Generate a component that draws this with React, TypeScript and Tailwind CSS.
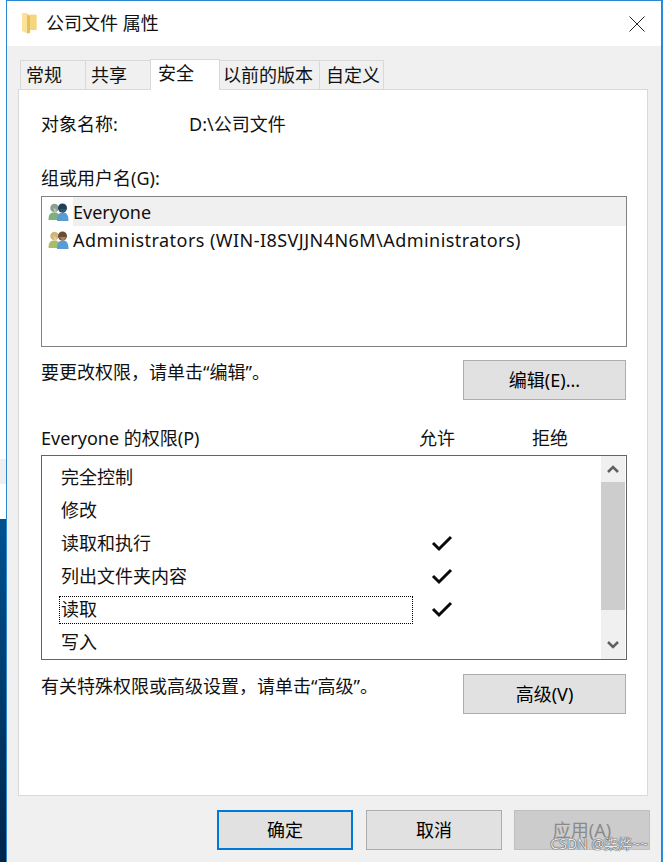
const font = "[font-family:'Noto_Sans','Noto_Sans_CJK_SC',sans-serif]";

function UsersIcon({ gold }: { gold?: boolean }) {
  return (
    <svg width="21" height="18" viewBox="0 0 21 18" className="shrink-0">
      <path d="M0.500 17c0-5 1.500-7 4.500-7.500h3c2.500 0.500 4 2.500 4 7.500z" fill={gold ? "#a8bd6a" : "#7fb07a"} />
      <circle cx="6.500" cy="5" r="4.300" fill={gold ? "#cdb878" : "#8c9f92"} />
      <path d="M5.500 5c1.500 0 3 1 3 2.500s-1 2.500-2.500 2.500z" fill={gold ? "#e8c9a0" : "#b4c3b4"} />
      <path d="M9 18c0-5.500 1.500-8 5-8.500h2c3 0.500 4.500 3 4.500 8.500z" fill="#5b9bd5" />
      <circle cx="14.500" cy="5" r="4.500" fill={gold ? "#6b4d33" : "#20405a"} />
      <path d="M11.500 6c1 1.500 2 3.500 3.500 3.500s2.500-1.500 3-3.500z" fill={gold ? "#a9825f" : "#33566e"} />
    </svg>
  );
}

function Tab({ label, active, w, pl }: { label: string; active?: boolean; w: string; pl: string }) {
  if (active) {
    return (
      <div className={`${w} ${pl} -mt-[2px] -mb-px -ml-px z-10 flex h-[31px] items-center border border-b-0 border-[#d9d9d9] bg-white pb-[4px] text-[18px]`}>
        {label}
      </div>
    );
  }
  return (
    <div className={`${w} ${pl} -ml-px flex h-[29px] items-center border border-b-0 border-[#d9d9d9] bg-[#f0f0f0] text-[18px] first:ml-0`}>
      {label}
    </div>
  );
}

function DlgButton({ label, w, kind }: { label: string; w: string; kind?: "primary" | "disabled" }) {
  const tone =
    kind === "primary"
      ? "border-2 border-[#0078d7] bg-[#e1e1e1] text-black"
      : kind === "disabled"
        ? "border border-[#bfbfbf] bg-[#cccccc] text-[#8a8a8a]"
        : "border border-[#adadad] bg-[#e1e1e1] text-black";
  return <div className={`${w} ${tone} flex h-10 items-center justify-center text-[18px]`}>{label}</div>;
}

function Check() {
  return (
    <svg width="22" height="18" viewBox="0 0 22 18">
      <path d="M2 9l6 6L20 3" fill="none" stroke="#0a0a0a" strokeWidth="3" />
    </svg>
  );
}

const perms = [
  { name: "完全控制", allow: false },
  { name: "修改", allow: false },
  { name: "读取和执行", allow: true },
  { name: "列出文件夹内容", allow: true },
  { name: "读取", allow: true, focus: true },
  { name: "写入", allow: false },
];

export default function App() {
  return (
    <div className={`${font} flex h-[862px] w-[663px] overflow-hidden bg-white text-[#111]`}>
      {/* desktop peeking out on the left */}
      <div className="flex w-[6px] shrink-0 flex-col">
        <div className="h-[459px] bg-white" />
        <div className="h-[25px] bg-[#efefef]" />
        <div className="h-[35px] bg-white" />
        <div className="flex-1 bg-gradient-to-b from-[#02518f] via-[#013c6d] to-[#00264a]" />
      </div>

      <div className="flex w-[656px] shrink-0 flex-col border-x border-t border-[#2a86d0] bg-[#f0f0f0]">
        <div className="flex h-[45px] shrink-0 items-center bg-white pl-[15px] pr-[16px]">
          <svg width="15" height="21" viewBox="0 0 15 21" className="shrink-0">
            <path d="M0 0h5l1 1.500h8.500V17H5v3.500L0 18z" fill="#fbe29a" />
            <path d="M5.500 2h9v15h-9z" fill="#f5d67f" />
            <path d="M5 1.500l3 2V20l-3 0.500z" fill="#e6bf5c" />
          </svg>
          <span className="ml-[9px] text-[18px]">公司文件 属性</span>
          <svg width="16" height="16" viewBox="0 0 16 16" className="ml-auto shrink-0">
            <path d="M0.500 0.500l15 15M15.500 0.500l-15 15" stroke="#222" strokeWidth="1" />
          </svg>
        </div>

        <div className="flex-1 px-[11px] pt-[14px]">
          <div className="flex h-[29px] items-end pl-[2px]">
            <Tab label="常规" w="w-[66px]" pl="pl-[5px]" />
            <Tab label="共享" w="w-[66px]" pl="pl-[5px]" />
            <Tab label="安全" active w="w-[70px]" pl="pl-[7px]" />
            <Tab label="以前的版本" w="w-[101px]" pl="pl-[3px]" />
            <Tab label="自定义" w="w-[65px]" pl="pl-[6px]" />
          </div>

          <div className="flex h-[707px] w-[630px] flex-col border border-[#d9d9d9] bg-white pl-[22px] pr-[20px] pt-[21px]">
            <div className="flex h-[26px] items-center text-[18px]">
              <span className="w-[148px]">对象名称:</span>
              <span>D:\公司文件</span>
            </div>

            <div className="mt-[28px] flex h-[26px] items-center text-[18px]">组或用户名(G):</div>
            <div className="mt-[5px] h-[151px] w-[586px] border border-[#828282] pl-[6px] text-[18px]">
              <div className="flex h-[29px] items-center gap-[4px]">
                <UsersIcon />
                <span className="flex h-full flex-1 items-center bg-[#f0f0f0] pt-px">Everyone</span>
              </div>
              <div className="flex h-[28px] items-center gap-[4px]">
                <UsersIcon gold />
                <span className="tracking-[0.45px]">Administrators (WIN-I8SVJJN4N6M\Administrators)</span>
              </div>
            </div>

            <div className="mt-[13px] flex h-[40px] w-[585px] justify-between">
              <span className="text-[18px] leading-[24px]">要更改权限，请单击“编辑”。</span>
              <DlgButton label="编辑(E)..." w="w-[163px]" />
            </div>

            <div className="mt-[25px] flex h-[26px] items-center text-[18px]">
              <span className="w-[378px]">Everyone 的权限(P)</span>
              <span className="w-[113px]">允许</span>
              <span>拒绝</span>
            </div>

            <div className="mt-[4px] flex h-[205px] w-[586px] border border-[#646464]">
              <div className="flex-1 overflow-hidden pl-[17px] pt-[5px] text-[18px]">
                {perms.map((p) => (
                  <div key={p.name} className="flex h-[33px] items-center">
                    <span
                      className={
                        p.focus
                          ? "flex h-[28px] w-[354px] items-center border border-dotted border-black pl-px"
                          : "w-[354px] pl-[2px]"
                      }
                    >
                      {p.name}
                    </span>
                    <span className="ml-[18px] flex -translate-y-px">{p.allow && <Check />}</span>
                  </div>
                ))}
              </div>
              <div className="flex w-[24px] shrink-0 flex-col bg-[#f0f0f0]">
                <div className="flex h-[26px] items-center justify-center">
                  <svg width="12" height="8" viewBox="0 0 12 8">
                    <path d="M1 7l5-5 5 5" fill="none" stroke="#606060" strokeWidth="2.500" />
                  </svg>
                </div>
                <div className="h-[128px] bg-[#cdcdcd]" />
                <div className="flex flex-1 items-center justify-center pt-[20px]">
                  <svg width="12" height="8" viewBox="0 0 12 8">
                    <path d="M1 1l5 5 5-5" fill="none" stroke="#606060" strokeWidth="2.500" />
                  </svg>
                </div>
              </div>
              <div className="w-px shrink-0 bg-white" />
            </div>

            <div className="mt-[14px] flex h-[40px] w-[585px] justify-between">
              <span className="text-[18px] leading-[24px]">有关特殊权限或高级设置，请单击“高级”。</span>
              <DlgButton label="高级(V)" w="w-[163px]" />
            </div>
          </div>

          <div className="mt-[14px] flex justify-end gap-[13px]">
            <DlgButton label="确定" w="w-[136px]" kind="primary" />
            <DlgButton label="取消" w="w-[136px]" />
            <div className="relative -ml-px">
              <DlgButton label="应用(A)" w="w-[136px]" kind="disabled" />
              <span className="absolute right-[2px] top-[24px] whitespace-nowrap text-[14px] leading-[20px] text-[#e8e8e8] [text-shadow:0_0_1px_#333,0_0_1px_#333]">
                CSDN @柒烨~~
              </span>
            </div>
          </div>
        </div>
      </div>

      <div className="flex-1 bg-[#2a8fe0]" />
    </div>
  );
}
